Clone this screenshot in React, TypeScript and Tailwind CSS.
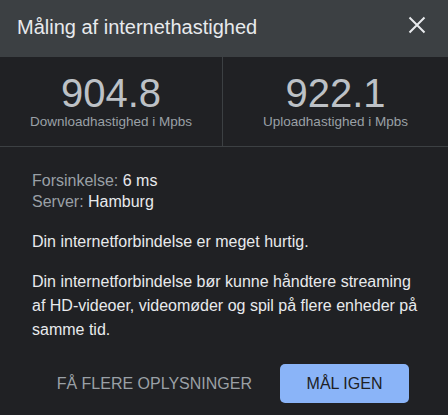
import React from "react";

export default function App() {
  return (
    <div
      className="w-[448px] h-[415px] bg-[#202124] overflow-hidden"
      style={{ fontFamily: '"Liberation Sans", Arial, sans-serif' }}
    >
      <div className="h-[57px] bg-[#3c4043] flex items-start justify-between pl-[17px] pr-[19px] pt-[13px]">
        <div className="text-[20px] leading-[28px] text-[#e8eaed]">Måling af internethastighed</div>
        <svg width="24" height="24" viewBox="0 0 24 24">
          <path d="M4.5 4.5 L19.5 19.5 M19.5 4.5 L4.5 19.5" stroke="#e8eaed" strokeWidth="2" fill="none" />
        </svg>
      </div>
      <div className="flex border-b border-[#3c4043]">
        <div className="w-[223px] flex flex-col items-center pt-[16px] pb-[16px] border-r border-[#3c4043]">
          <div className="text-[40px] leading-[40px] text-[#bdc1c6]">904.8</div>
          <div className="text-[13.5px] leading-[16px] text-[#9aa0a6] mt-[1px]">Downloadhastighed i Mpbs</div>
        </div>
        <div className="flex-1 flex flex-col items-center pt-[16px] pb-[16px]">
          <div className="text-[40px] leading-[40px] text-[#bdc1c6]">922.1</div>
          <div className="text-[13.5px] leading-[16px] text-[#9aa0a6] mt-[1px]">Uploadhastighed i Mpbs</div>
        </div>
      </div>
      <div className="pl-[32px] pr-[20px] pt-[23px] text-[16px] text-[#e8eaed]">
        <div className="leading-[21px]">
          <span className="text-[#9aa0a6]">Forsinkelse: </span>6 ms
        </div>
        <div className="leading-[21px]">
          <span className="text-[#9aa0a6]">Server: </span>Hamburg
        </div>
        <p className="leading-[24px] mt-[18px]">Din internetforbindelse er meget hurtig.</p>
        <p className="leading-[24px] mt-[16px]">
          Din internetforbindelse bør kunne håndtere streaming af HD-videoer, videomøder og spil på flere enheder på samme tid.
        </p>
      </div>
      <div className="flex justify-end items-center gap-[28px] pr-[39px] mt-[22px]">
        <div className="text-[16px] text-[#9aa0a6]">FÅ FLERE OPLYSNINGER</div>
        <div className="w-[129px] h-[39px] rounded-[5px] bg-[#8ab4f8] flex items-center justify-center text-[16px] text-[#202124]">
          MÅL IGEN
        </div>
      </div>
    </div>
  );
}
